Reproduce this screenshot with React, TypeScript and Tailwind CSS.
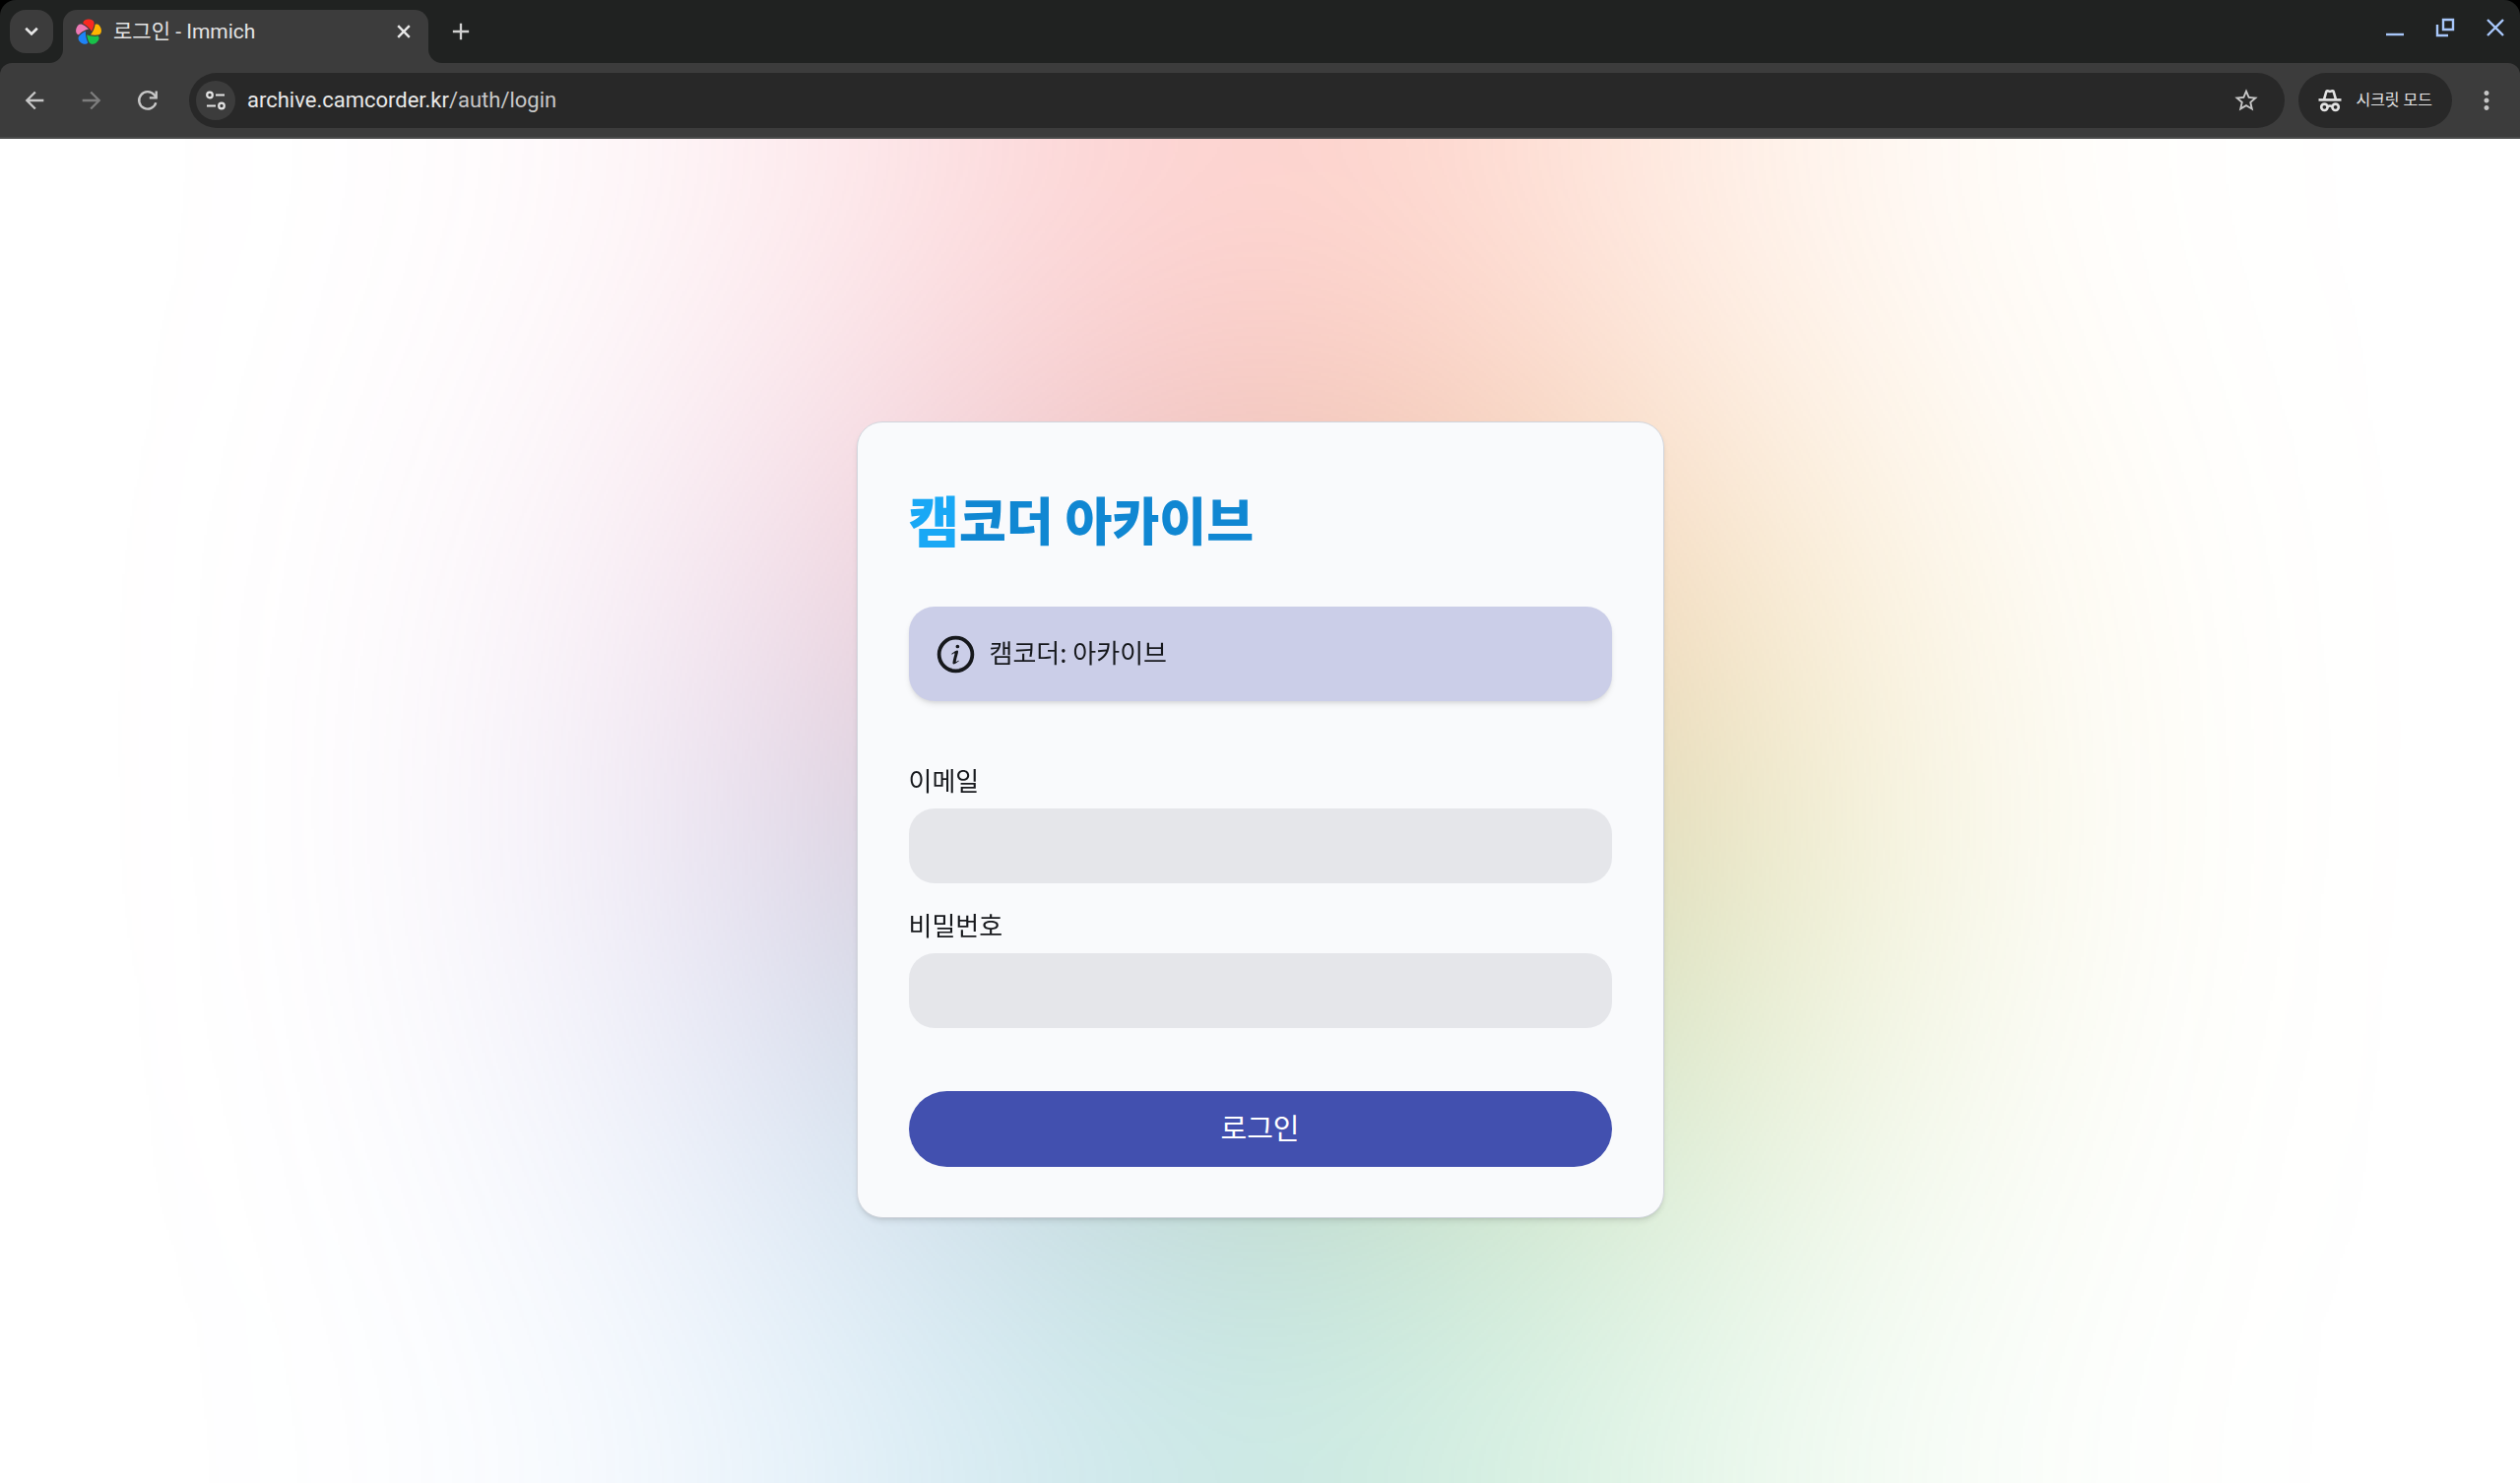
import { useState } from "react";
import { clsx } from "clsx";
import { MdArrowBack, MdArrowForward, MdStarBorder, MdMoreVert, MdAdd } from "react-icons/md";

interface Petal {
  fill: string;
  d: string;
}

const petals: Petal[] = [
  {
    fill: "#FA2921",
    d: "M375.48,267.63c38.64,34.21,69.78,70.87,89.82,105.42c34.42-61.56,57.42-134.71,57.71-181.3c0-0.33,0-0.63,0-0.91c0-68.94-68.77-95.77-128.01-95.77s-128.01,26.83-128.01,95.77c0,0.94,0,2.2,0,3.72C300.01,209.24,339.15,235.47,375.48,267.63z",
  },
  {
    fill: "#ED79B5",
    d: "M164.7,455.63c24.15-26.87,61.2-55.99,103.01-80.61c44.48-26.18,88.97-44.47,128.02-52.84c-47.91-51.76-110.37-96.24-154.6-110.91c-0.31-0.1-0.6-0.19-0.86-0.28c-65.57-21.3-112.34,35.81-130.64,92.15c-18.3,56.34-14.04,130.04,51.53,151.34C162.05,454.77,163.25,455.16,164.7,455.63z",
  },
  {
    fill: "#FFB400",
    d: "M681.07,302.19c-18.3-56.34-65.07-113.45-130.64-92.15c-0.9,0.29-2.1,0.68-3.54,1.15c-3.75,35.93-16.6,81.27-35.96,125.76c-20.59,47.32-45.84,88.27-72.51,118c69.18,13.72,145.86,12.98,190.26-1.14c0.31-0.1,0.6-0.2,0.86-0.28C695.11,432.22,699.37,358.52,681.07,302.19z",
  },
  {
    fill: "#1E83F7",
    d: "M336.54,510.71c-11.15-50.39-14.8-98.36-10.7-138.08c-64.03,29.57-125.63,75.23-153.26,112.76c-0.19,0.26-0.37,0.51-0.53,0.73c-40.52,55.78-0.66,117.91,47.27,152.72c47.92,34.82,119.33,53.54,159.86-2.24c0.56-0.76,1.3-1.78,2.19-3.01C363.28,602.32,347.02,558.08,336.54,510.71z",
  },
  {
    fill: "#18C249",
    d: "M617.57,482.52c-35.33,7.54-82.42,9.33-130.72,4.66c-51.37-4.96-98.11-16.32-134.63-32.5c8.33,70.03,32.73,142.73,59.88,180.6c0.19,0.26,0.37,0.51,0.53,0.73c40.52,55.78,111.93,37.06,159.86,2.24c47.92-34.82,87.79-96.95,47.27-152.72C619.2,484.77,618.46,483.75,617.57,482.52z",
  },
];

const Flower = ({ className, viewBox }: { className?: string; viewBox: string }) => (
  <svg viewBox={viewBox} className={className} aria-hidden="true">
    {petals.map((petal) => (
      <path key={petal.fill} fill={petal.fill} d={petal.d} />
    ))}
  </svg>
);

const ReloadIcon = () => (
  <svg viewBox="0 0 24 24" className="size-6" fill="none" stroke="currentColor" strokeWidth="2.4" aria-hidden="true">
    <path d="M20.3 14.2A8.7 8.7 0 1 1 18.6 6.3L20.6 8.6" />
    <path d="M20.7 2.5v6.9h-6.9" />
  </svg>
);

const SiteSettingsIcon = () => (
  <svg viewBox="0 0 20 20" className="size-5" fill="none" stroke="currentColor" strokeWidth="2.2" aria-hidden="true">
    <circle cx="4" cy="4.5" r="2.8" />
    <path d="M10 4.5h9M1 15.5h9" />
    <circle cx="16" cy="15.5" r="2.8" />
  </svg>
);

const IncognitoIcon = () => (
  <svg viewBox="0 0 24 24" className="size-6" fill="none" stroke="currentColor" strokeWidth="2.6" aria-hidden="true">
    <path d="M0.5 11.4h23" />
    <path d="M6 11.2L8.3 3q.3-1 1.3-.7L12 3l2.4-.7q1-.3 1.3.7l2.3 8.2" />
    <circle cx="6.4" cy="18.8" r="3.2" />
    <circle cx="17.6" cy="18.8" r="3.2" />
    <path d="M9.4 18.2q2.6-1.4 5.2 0" />
  </svg>
);

const InfoIcon = () => (
  <svg viewBox="0 0 24 24" className="size-[45px] shrink-0" fill="currentColor" aria-hidden="true">
    <circle cx="12" cy="12" r="9" fill="none" stroke="currentColor" strokeWidth="2" />
    <g transform="translate(4.1 4.1) scale(.66)">
      <path d="M13.5,4A1.5,1.5 0 0,0 12,5.5A1.5,1.5 0 0,0 13.5,7A1.5,1.5 0 0,0 15,5.5A1.5,1.5 0 0,0 13.5,4M13.14,8.77C11.95,8.87 8.7,11.46 8.7,11.46C8.5,11.61 8.56,11.6 8.72,11.88C8.88,12.15 8.86,12.17 9.05,12.04C9.25,11.91 9.58,11.7 10.13,11.36C12.25,10 10.47,13.14 9.56,18.43C9.2,21.05 11.56,19.7 12.17,19.3C12.77,18.91 14.38,17.8 14.54,17.69C14.76,17.54 14.6,17.42 14.43,17.17C14.31,17 14.19,17.12 14.19,17.12C13.54,17.55 12.35,18.45 12.19,17.88C12,17.31 13.22,13.4 13.89,10.71C14,10.07 14.3,8.67 13.14,8.77Z" />
    </g>
  </svg>
);

const TabFoot = ({ side }: { side: "left" | "right" }) => (
  <svg
    viewBox="0 0 14 14"
    className={clsx("absolute bottom-0 size-[14px] text-[#3c3c3c]", side === "left" ? "right-full" : "left-full")}
    aria-hidden="true"
  >
    <path fill="currentColor" d={side === "left" ? "M14 0v14H0A14 14 0 0 0 14 0z" : "M0 0v14h14A14 14 0 0 1 0 0z"} />
  </svg>
);

const TabStrip = () => (
  <div className="flex h-16 items-end bg-[#202221]">
    <button
      aria-label="탭 검색"
      className="mb-[10px] ml-[10px] flex h-11 w-[44px] items-center justify-center rounded-2xl bg-[#3c3c3c] text-[#e8e8e8]"
    >
      <svg viewBox="0 0 14 10" className="h-[10px] w-[14px]" fill="none" stroke="currentColor" strokeWidth="2.6" aria-hidden="true">
        <path d="M1.2 1.8L7 7.4l5.8-5.6" />
      </svg>
    </button>

    <div className="relative ml-[10px] flex h-[54px] w-[371px] items-center rounded-t-[14px] bg-[#3c3c3c] pb-[10px] pl-[13px] pr-[12px]">
      <TabFoot side="left" />
      <Flower viewBox="98 92 594 572" className="size-[26px]" />
      <span className="ml-[12px] flex-1 truncate text-[21px] leading-6 text-[#e3e3e3]">로그인 - Immich</span>
      <button aria-label="탭 닫기" className="flex size-[26px] items-center justify-center text-[#e8e8e8]">
        <svg viewBox="0 0 14 14" className="size-[14px]" fill="none" stroke="currentColor" strokeWidth="2.4" aria-hidden="true">
          <path d="M1.2 1.2l11.6 11.6M12.8 1.2L1.2 12.8" />
        </svg>
      </button>
      <TabFoot side="right" />
    </div>

    <button aria-label="새 탭" className="mb-[18px] ml-[19px] flex size-7 items-center justify-center text-[#d0d0d0]">
      <MdAdd className="size-7" />
    </button>

    <div className="mb-[26px] ml-auto flex items-center gap-[31px] pr-[15px] text-[#a8c7fa]">
      <button aria-label="최소화">
        <svg viewBox="0 0 20 20" className="size-5" fill="none" stroke="currentColor" strokeWidth="2.4" aria-hidden="true">
          <path d="M1 17h18" />
        </svg>
      </button>
      <button aria-label="이전 크기로 복원">
        <svg viewBox="0 0 20 20" className="size-5" fill="none" stroke="currentColor" strokeWidth="2.4" aria-hidden="true">
          <path d="M8 2h10v10H8zM2 7v11h11" />
        </svg>
      </button>
      <button aria-label="닫기">
        <svg viewBox="0 0 20 20" className="size-5" fill="none" stroke="currentColor" strokeWidth="2.4" aria-hidden="true">
          <path d="M2 2l16 16M18 2L2 18" />
        </svg>
      </button>
    </div>
  </div>
);

const Toolbar = () => {
  const [url, setUrl] = useState("archive.camcorder.kr/auth/login");
  const slash = url.indexOf("/");
  const host = slash < 0 ? url : url.slice(0, slash);
  const path = slash < 0 ? "" : url.slice(slash);

  return (
    <div className="bg-[#202221]">
      <div className="flex h-[77px] items-center rounded-t-[12px] border-b-2 border-[#4a4b4b] bg-[#3c3c3c] pl-[22px] pr-[19px] text-[#c7c7c7]">
        <button aria-label="뒤로" className="flex size-[26px] items-center justify-center">
          <MdArrowBack className="size-[28px] shrink-0" />
        </button>
        <button aria-label="앞으로" className="ml-[32px] flex size-[26px] items-center justify-center text-[#7d7d7d]">
          <MdArrowForward className="size-[28px] shrink-0" />
        </button>
        <button aria-label="새로고침" className="ml-[31px] flex size-[26px] items-center justify-center">
          <ReloadIcon />
        </button>

        <div className="ml-[29px] flex h-14 flex-1 items-center rounded-full bg-[#282828] pl-[7px] pr-[25px]">
          <button aria-label="사이트 정보" className="flex size-10 items-center justify-center rounded-full bg-[#3c3c3c] text-[#e3e3e3]">
            <SiteSettingsIcon />
          </button>
          <button
            onClick={() => setUrl("archive.camcorder.kr/auth/login")}
            className="ml-[12px] flex-1 text-left text-[22px] leading-7 text-[#e8e8e8]"
          >
            {host}
            <span className="text-[#c7c7c7]">{path}</span>
          </button>
          <button aria-label="북마크에 추가">
            <MdStarBorder className="size-[28px]" />
          </button>
        </div>

        <button className="ml-[14px] flex h-14 items-center gap-[14px] rounded-full bg-[#282828] px-[20px] text-[16px] text-[#e3e3e3]">
          <IncognitoIcon />
          시크릿 모드
        </button>
        <button aria-label="메뉴" className="ml-[20px]">
          <MdMoreVert className="size-[30px]" />
        </button>
      </div>
    </div>
  );
};

interface FieldProps {
  id: string;
  label: string;
  type: string;
}

const Field = ({ id, label, type }: FieldProps) => (
  <div className="flex flex-col">
    <label htmlFor={id} className="mb-[11px] text-[26px] leading-[36px]">
      {label}
    </label>
    <input id={id} type={type} className="h-[76px] w-full rounded-[26px] bg-[#e5e6ea] px-6 text-[26px] outline-none" />
  </div>
);

const LoginCard = () => (
  <div className="w-full max-w-[820px] rounded-[26px] border border-gray-300 bg-[#f9fafc] px-[52px] pb-[51px] pt-[66px] text-[#16181c] shadow-md">
    <h1 className="flex h-[64px] items-center text-[52px] font-black leading-[64px] text-[#1087d2]">
      <span className="text-[56px] text-[#19a8f5]">캠</span>코더 아카이브
    </h1>

    <div className="mt-[57px] flex h-24 items-center gap-[12px] rounded-[26px] bg-[#cbcee8] px-[25px] text-[26px] leading-[36px] shadow-md">
      <InfoIcon />
      <p className="pb-1">캠코더: 아카이브</p>
    </div>

    <form className="mt-[62px] flex flex-col gap-6" onSubmit={(e) => e.preventDefault()}>
      <Field id="email" label="이메일" type="email" />
      <Field id="password" label="비밀번호" type="password" />
      <button type="submit" className="mt-10 h-[77px] rounded-full bg-[#4250af] pb-1 text-[29px] text-white">
        로그인
      </button>
    </form>
  </div>
);

// The flower is mirrored above and below so the blur keeps its colour at the edges
const Backdrop = () => (
  <div className="absolute inset-0">
    <div className="h-full blur-[320px]">
      <div className="relative h-full">
        <Flower viewBox="0 0 792 792" className="absolute bottom-full left-1/2 h-full w-full max-w-[1229px] -translate-x-1/2 -scale-y-100" />
        <Flower viewBox="0 0 792 792" className="mx-auto h-full w-full max-w-[1229px]" />
        <Flower viewBox="0 0 792 792" className="absolute left-1/2 top-full h-full w-full max-w-[1229px] -translate-x-1/2 -scale-y-100" />
      </div>
    </div>
  </div>
);

const App = () => (
  <div className="flex min-h-screen flex-col bg-black font-[Roboto,'Noto_Sans_CJK_KR',sans-serif]">
    <header className="overflow-hidden rounded-t-2xl">
      <TabStrip />
      <Toolbar />
    </header>

    <main className="relative flex flex-1 items-center justify-center overflow-hidden bg-white pt-[18px] font-['Noto_Sans_CJK_KR',sans-serif]">
      <Backdrop />
      <div className="relative flex w-full justify-center">
        <LoginCard />
      </div>
    </main>
  </div>
);

export default App;
